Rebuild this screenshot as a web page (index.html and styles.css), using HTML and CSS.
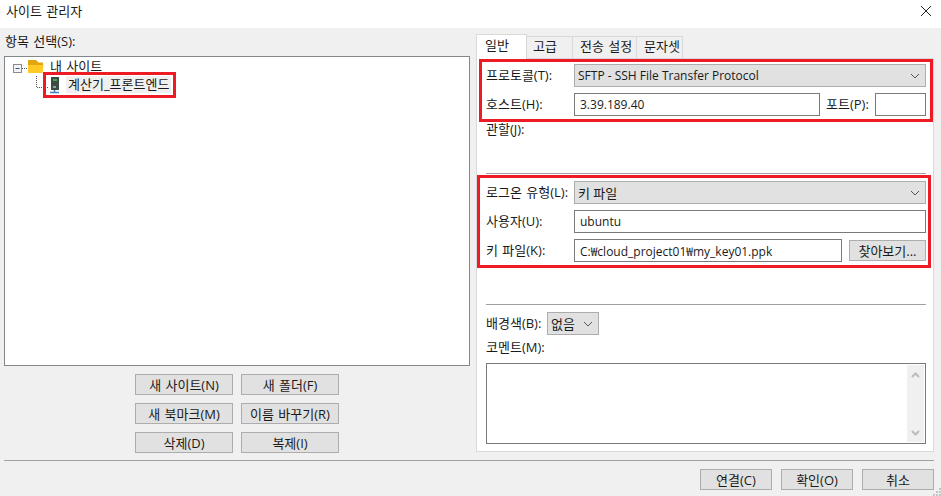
FILE: index.html
```html
<!DOCTYPE html>
<html lang="ko">
<head>
  <meta charset="utf-8">
  <title>사이트 관리자</title>
  <link rel="stylesheet" href="styles.css">
</head>
<body>
  <div class="dialog">
    <div class="titlebar">
      <span class="title">사이트 관리자</span>
      <svg class="close" width="12" height="12" viewBox="0 0 12 12"><path d="M1 1L11 11M11 1L1 11" stroke="#222" stroke-width="1" fill="none"/></svg>
    </div>

    <div class="main">
      <div class="left">
        <div class="left-label">항목 선택(S):</div>
        <div class="tree">
          <div class="tree-row root-row">
            <svg class="tree-lines" width="45" height="16" viewBox="0 0 45 16">
              <rect x="8.500" y="4.500" width="8" height="8" fill="#f4f4f4" stroke="#8a8a8a"/>
              <path d="M10.500 8.500H14.500" stroke="#3a5a8c"/>
              <path d="M17 8.500H23" stroke="#555" stroke-dasharray="1 1"/>
              <path d="M23 0H31L33.500 2.500H38V8H23Z" fill="#e2a70f"/>
              <path d="M23 5H38.500L37.500 13H23Z" fill="#ffc926"/>
            </svg>
            <span class="tree-text">내 사이트</span>
          </div>
          <div class="tree-row child-row">
            <svg class="tree-lines" width="61" height="18" viewBox="0 0 61 18">
              <path d="M31.500 0V11.500H43" stroke="#555" stroke-dasharray="1 1" fill="none"/>
              <rect x="46" y="1" width="8" height="13" fill="#3d4a46"/>
              <path d="M48 4H52" stroke="#3fae4a" stroke-width="2"/>
              <rect x="48" y="10" width="3" height="2" fill="#8fa0a0"/>
              <path d="M49.500 14V16M45 16.500H54" stroke="#3f7fc0" stroke-width="1.500"/>
            </svg>
            <span class="tree-text selected">계산기_프론트엔드</span>
          </div>
        </div>
        <div class="tree-buttons">
          <button>새 사이트(N)</button>
          <button>새 폴더(F)</button>
          <button>새 북마크(M)</button>
          <button>이름 바꾸기(R)</button>
          <button>삭제(D)</button>
          <button>복제(I)</button>
        </div>
      </div>

      <div class="right">
        <div class="tabs">
          <div class="tab active">일반</div>
          <div class="tab tab-adv">고급</div>
          <div class="tab tab-transfer">전송 설정</div>
          <div class="tab tab-charset">문자셋</div>
        </div>
        <div class="panel">
          <div class="row first">
            <label class="label">프로토콜(T):</label>
            <select class="grow latin"><option>SFTP - SSH File Transfer Protocol</option></select>
          </div>
          <div class="row">
            <label class="label">호스트(H):</label>
            <input class="grow" type="text" value="3.39.189.40">
            <label class="port-label">포트(P):</label>
            <input class="port" type="text">
          </div>
          <div class="plain-label zone">관할(J):</div>
          <hr class="rule rule-top">
          <div class="row">
            <label class="label">로그온 유형(L):</label>
            <select class="grow"><option>키 파일</option></select>
          </div>
          <div class="row">
            <label class="label">사용자(U):</label>
            <input class="grow" type="text" value="ubuntu">
          </div>
          <div class="row">
            <label class="label">키 파일(K):</label>
            <input class="grow" type="text" value="C:₩cloud_project01₩my_key01.ppk">
            <button class="browse">찾아보기...</button>
          </div>
          <hr class="rule rule-bottom">
          <div class="row">
            <label class="color-label">배경색(B):</label>
            <select class="color"><option>없음</option></select>
          </div>
          <div class="plain-label comment-label">코멘트(M):</div>
          <div class="comment">
            <textarea></textarea>
            <div class="scrollbar">
              <svg width="9" height="6" viewBox="0 0 9 6"><path d="M1 5L4.500 1.500L8 5" stroke="#bcbcbc" stroke-width="2" fill="none"/></svg>
              <svg width="9" height="6" viewBox="0 0 9 6"><path d="M1 1L4.500 4.500L8 1" stroke="#bcbcbc" stroke-width="2" fill="none"/></svg>
            </div>
          </div>
        </div>
      </div>

      <!-- red marks drawn over the screenshot -->
      <div class="mark mark-tree"></div>
      <div class="mark mark-host"></div>
      <div class="mark mark-login"></div>
    </div>

    <hr class="rule footer-rule">
    <div class="footer">
      <button>연결(C)</button>
      <button>확인(O)</button>
      <button>취소</button>
    </div>
    <svg class="grip" width="8" height="8" viewBox="0 0 8 8"><path d="M6 0h2v2H6zM3 3h2v2H3zM6 3h2v2H6zM0 6h2v2H0zM3 6h2v2H3zM6 6h2v2H6z" fill="#c4c4c4"/></svg>
  </div>
</body>
</html>
```

FILE: styles.css
```css
* {
  box-sizing: border-box;
}
body {
  margin: 0;
  background: #f0f0f0;
  font-family: "Open Sans", "Noto Sans CJK KR", sans-serif;
  font-size: 13px;
  word-spacing: 1px;
  color: #1a1a1a;
  overflow: hidden;
}
.dialog {
  position: relative;
  width: 941px;
  height: 496px;
}
.titlebar {
  display: flex;
  align-items: center;
  justify-content: space-between;
  height: 28px;
  padding: 0 9px 6px 6px;
  background: white;
}
.title {
  line-height: 20px;
}
.main {
  position: relative;
  display: flex;
  gap: 6px;
  height: 424px;
  padding: 0 7px 0 4px;
}
.left {
  width: 466px;
}
.left-label {
  height: 28px;
  line-height: 26px;
  padding-left: 1px;
}
.tree {
  height: 310px;
  padding-top: 3px;
  background: white;
  border: 1px solid #82878c;
}
.tree-row {
  display: flex;
  align-items: flex-start;
}
.root-row {
  height: 16px;
}
.child-row {
  height: 18px;
  margin-left: 0;
}
.tree-lines {
  flex: none;
}
.tree-text {
  line-height: 12px;
}
.root-row .tree-text {
  margin-left: 0;
}
.selected {
  width: 105px;
  padding-left: 2px;
  line-height: 17px;
  background: #f0f0f0;
}
button {
  height: 21px;
  padding: 0;
  font: inherit;
  word-spacing: 1px;
  color: inherit;
  background: #e1e1e1;
  border: 1px solid #adadad;
}
.tree-buttons {
  display: grid;
  grid-template-columns: 98px 98px;
  grid-auto-rows: 21px;
  gap: 8px;
  justify-content: center;
  margin-top: 8px;
}
.right {
  width: 458px;
  padding-top: 6px;
}
.tabs {
  display: flex;
  align-items: flex-end;
  height: 24px;
}
.tab {
  height: 22px;
  line-height: 19px;
  background: #f0f0f0;
  border: 1px solid #d9d9d9;
  border-bottom: 0;
  border-left: 0;
}
.tab.active {
  position: relative;
  z-index: 1;
  width: 51px;
  height: 25px;
  margin-bottom: -1px;
  padding-left: 8px;
  line-height: 20px;
  background: white;
  border-left: 1px solid #d9d9d9;
}
.tab-adv {
  width: 46px;
  padding-left: 6px;
}
.tab-transfer {
  width: 64px;
  padding-left: 7px;
}
.tab-charset {
  width: 46px;
  padding-left: 7px;
}
.panel {
  height: 394px;
  padding: 0 7px 0 9px;
  background: white;
  border: 1px solid #d9d9d9;
}
.row {
  display: flex;
  align-items: center;
  height: 23px;
  margin-top: 6px;
}
.row.first {
  margin-top: 5px;
}
.row label {
  padding-bottom: 2px;
}
.label {
  flex: none;
  width: 88px;
}
.grow {
  flex: 1;
  min-width: 0;
}
select,
input,
textarea {
  height: 23px;
  font: inherit;
  color: inherit;
  border-radius: 0;
}
select {
  appearance: none;
  padding: 0 20px 0 3px;
  border: 1px solid #adadad;
  background: #e1e1e1 url("data:image/svg+xml,%3Csvg width='10' height='6' viewBox='0 0 10 6' xmlns='http://www.w3.org/2000/svg'%3E%3Cpath d='M1 1L5 5L9 1' stroke='%23555555' fill='none'/%3E%3C/svg%3E") no-repeat right 5px center;
}
select.latin {
  font-size: 12px;
}
input {
  padding: 0 5px;
  font-size: 12px;
  background: white;
  border: 1px solid #7a7a7a;
}
.port-label {
  flex: none;
  width: 49px;
  margin-left: 6px;
}
.port {
  flex: none;
  width: 51px;
}
.browse {
  flex: none;
  width: 77px;
  margin-left: 7px;
}
.plain-label {
  line-height: 15px;
}
.zone {
  height: 17px;
  margin-top: 6px;
}
.rule {
  height: 1px;
  margin: 0;
  background: #a0a0a0;
  border: 0;
}
.rule-top {
  margin-top: 34px;
  margin-bottom: 1px;
}
.rule-top + .row {
  margin-top: 7px;
}
.rule-bottom {
  margin-top: 42px;
}
.rule-bottom + .row {
  margin-top: 7px;
}
.color-label {
  flex: none;
  width: 61px;
}
.color {
  width: 52px;
}
.comment-label {
  height: 17px;
  margin-top: 5px;
}
.comment {
  display: flex;
  height: 81px;
  margin-top: 6px;
  padding: 1px;
  background: white;
  border: 1px solid #7a7a7a;
}
.comment textarea {
  flex: 1;
  height: 100%;
  padding: 0;
  border: 0;
  outline: 0;
  resize: none;
}
.scrollbar {
  display: flex;
  flex-direction: column;
  align-items: center;
  justify-content: space-between;
  width: 17px;
  padding: 7px 0 6px;
  background: #f0f0f0;
}
.footer-rule {
  width: 930px;
  margin: 8px 0 0 4px;
}
.footer {
  display: flex;
  justify-content: flex-end;
  gap: 9px;
  margin-top: 8px;
  padding-right: 7px;
}
.footer button {
  width: 72px;
}
.mark {
  position: absolute;
  border: 3px solid #ed1c24;
}
.mark-tree {
  left: 43px;
  top: 44px;
  width: 133px;
  height: 26px;
}
.mark-host {
  left: 479px;
  top: 31px;
  width: 454px;
  height: 63px;
}
.mark-login {
  left: 477px;
  top: 147px;
  width: 454px;
  height: 93px;
}
.grip {
  position: absolute;
  right: 0;
  bottom: 0;
}
```
